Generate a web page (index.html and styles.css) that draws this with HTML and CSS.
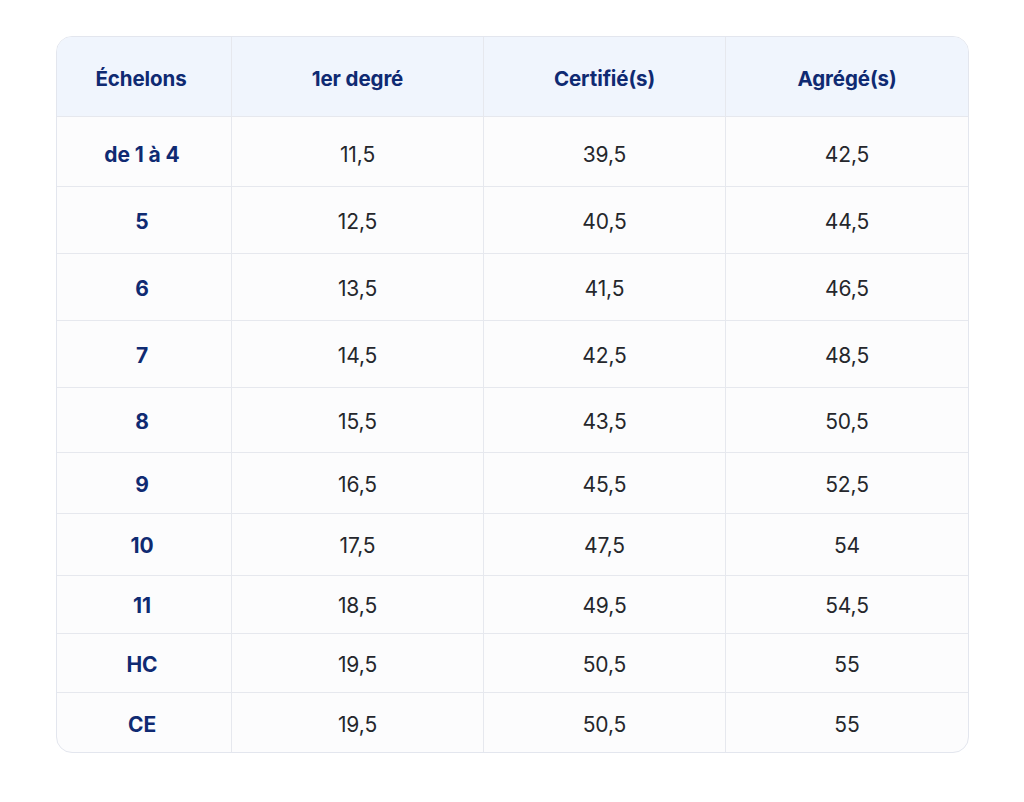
FILE: index.html
```html
<!DOCTYPE html>
<html lang="fr">
<head>
<meta charset="utf-8">
<title>Échelons</title>
<link rel="stylesheet" href="styles.css">
</head>
<body>
<main class="page">
  <div class="table">
    <div class="cell head key">Échelons</div>
    <div class="cell head">1er degré</div>
    <div class="cell head">Certifié(s)</div>
    <div class="cell head">Agrégé(s)</div>

    <div class="cell key first">de 1 à 4</div><div class="cell first">11,5</div><div class="cell first">39,5</div><div class="cell first">42,5</div>
    <div class="cell key">5</div><div class="cell">12,5</div><div class="cell">40,5</div><div class="cell">44,5</div>
    <div class="cell key">6</div><div class="cell">13,5</div><div class="cell">41,5</div><div class="cell">46,5</div>
    <div class="cell key">7</div><div class="cell">14,5</div><div class="cell">42,5</div><div class="cell">48,5</div>
    <div class="cell key">8</div><div class="cell">15,5</div><div class="cell">43,5</div><div class="cell">50,5</div>
    <div class="cell key">9</div><div class="cell">16,5</div><div class="cell">45,5</div><div class="cell">52,5</div>
    <div class="cell key">10</div><div class="cell">17,5</div><div class="cell">47,5</div><div class="cell">54</div>
    <div class="cell key">11</div><div class="cell">18,5</div><div class="cell">49,5</div><div class="cell">54,5</div>
    <div class="cell key">HC</div><div class="cell">19,5</div><div class="cell">50,5</div><div class="cell">55</div>
    <div class="cell key last">CE</div><div class="cell last">19,5</div><div class="cell last">50,5</div><div class="cell last">55</div>
  </div>
</main>
</body>
</html>
```

FILE: styles.css
```css
* { box-sizing: border-box; }
html, body { margin: 0; padding: 0; background: #ffffff; }
body {
  font-family: Inter, "Noto Sans", "Liberation Sans", sans-serif;
  width: 1024px;
  height: 802px;
  overflow: hidden;
}
.page {
  padding: 36px 0 0 56px;
}
.table {
  width: 913px;
  display: grid;
  grid-template-columns: 175px 252px 242px 1fr;
  grid-template-rows: 80px 70px 67px 67px 67px 65px 61px 62px 58px 59px 59px;
  border: 1px solid #e3e6ee;
  border-radius: 16px;
  overflow: hidden;
  background: #fcfcfd;
}
.cell {
  display: flex;
  align-items: center;
  justify-content: center;
  border-right: 1px solid #e6e8ee;
  border-bottom: 1px solid #e6e8ee;
  font-size: 21px;
  color: #25272c;
  letter-spacing: -0.1px;
  padding-top: 2px;
}
.cell:nth-child(4n) { border-right: none; }
.cell.first { padding-top: 5px; }
.cell.last { border-bottom: none; padding-top: 3px; }
.key {
  color: #0f2a72;
  font-weight: 700;
  padding-right: 4px;
}
.head {
  background: #f0f5fd;
  color: #0f2a72;
  font-weight: 700;
  font-size: 20.5px;
  padding-top: 4px;
}
.head.key { padding-right: 6px; }
```
